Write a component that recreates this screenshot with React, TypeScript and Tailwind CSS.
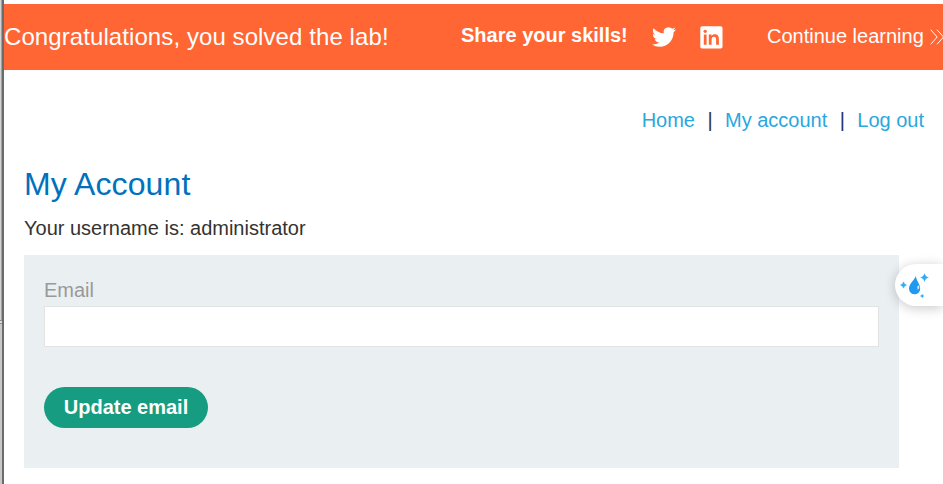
import React from "react";

function TwitterIcon() {
  return (
    <svg viewBox="0 0 24 24" className="h-[24px] w-[24px] shrink-0" fill="#fff">
      <path d="M23.953 4.57a10 10 0 01-2.825.775 4.958 4.958 0 002.163-2.723c-.951.555-2.005.959-3.127 1.184a4.92 4.92 0 00-8.384 4.482C7.69 8.095 4.067 6.13 1.64 3.162a4.822 4.822 0 00-.666 2.475c0 1.71.87 3.213 2.188 4.096a4.904 4.904 0 01-2.228-.616v.06a4.923 4.923 0 003.946 4.827 4.996 4.996 0 01-2.212.085 4.936 4.936 0 004.604 3.417 9.867 9.867 0 01-6.102 2.105c-.39 0-.779-.023-1.17-.067a13.995 13.995 0 007.557 2.209c9.053 0 13.998-7.496 13.998-13.985 0-.21 0-.42-.015-.63A9.935 9.935 0 0024 4.59z" />
    </svg>
  );
}

function LinkedInIcon() {
  return (
    <svg viewBox="0 0 23 23" className="h-[23px] w-[23px] shrink-0">
      <rect x=".3" y=".3" width="22.200" height="22.200" rx="1.800" fill="#fff" />
      <g fill="#ff6633">
        <circle cx="5.200" cy="5.300" r="1.650" />
        <path d="M3.800 8.600h2.800v10.200H3.800zM8.800 8.600h2.700V10c.7-1.100 1.800-1.700 3.200-1.700 3 0 4.200 1.800 4.200 4.900v5.600h-2.800v-5.200c0-1.800-.5-2.900-2.100-2.900-1.700 0-2.400 1.200-2.400 2.900v5.200H8.800z" />
      </g>
    </svg>
  );
}

function DropWidget() {
  return (
    <div className="absolute top-[264px] right-0 h-[42px] w-[48px] rounded-l-full bg-white shadow-[0_2px_12px_rgba(0,0,0,0.22)]">
      <svg viewBox="0 0 48 42" className="h-[42px] w-[48px]">
        <path d="M20.800 12C19.500 16 14 19.500 14 24.800a5.600 5.500 0 0 0 11.200 0C25.200 20 21.500 17 20.800 12z" fill="#1e9bf0" />
        <path d="M22.300 22.300l1.700-.8.300 2.800-1.700 1.500z" fill="#d5edff" />
        <g fill="#35adf5">
          <path d="M29.500 9Q30.300 12.700 34 13.500Q30.300 14.300 29.500 18Q28.700 14.300 25 13.500Q28.700 12.700 29.500 9z" />
          <path d="M8.500 17.800Q9.200 20.300 11.700 21Q9.200 21.700 8.500 24.200Q7.800 21.700 5.300 21Q7.800 20.300 8.500 17.800z" stroke="#35adf5" strokeWidth=".3" />
          <path d="M27.200 29.700Q27.700 31.500 29.500 32Q27.700 32.500 27.200 34.300Q26.700 32.500 24.900 32Q26.700 31.500 27.200 29.700z" />
        </g>
      </svg>
    </div>
  );
}

export default function App() {
  return (
    <div className="relative flex h-[484px] w-[943px] overflow-hidden bg-white font-['Liberation_Sans',Arial,sans-serif] text-[20px] text-[#333332]">
      <div className="flex w-[4px] shrink-0">
        <div className="flex w-[2px] flex-col">
          <div className="h-[320px] border-r border-[#a0a0a0] bg-[#d2d2d2]" />
          <div className="h-[4px] border-y border-[#8c8c8c] bg-[#dcdcdc]" />
          <div className="flex-1 bg-[#c8c8c8]" />
        </div>
        <div className="w-[2px] bg-[#6b6b6b]" />
      </div>
      <div className="flex min-w-0 flex-1 flex-col pt-[4px]">
        <header className="flex h-[66px] shrink-0 items-center overflow-hidden bg-[#ff6633] whitespace-nowrap text-white">
          <div className="w-[457px] shrink-0 text-[24px] leading-[66px] tracking-[0.085px]">Congratulations, you solved the lab!</div>
          <div className="w-[191px] shrink-0 pb-[4px] font-bold">Share your skills!</div>
          <TwitterIcon />
          <div className="w-[24px] shrink-0" />
          <LinkedInIcon />
          <div className="ml-[44px] w-[163px] shrink-0 pb-[2px]">Continue learning</div>
          <svg viewBox="0 0 14 16" className="h-[16px] w-[14px] shrink-0" fill="none" stroke="#fff">
            <path d="M.7.7 7.200 8 .7 15.300M7 .7 13.500 8 7 15.300" />
          </svg>
        </header>
        <nav className="mt-[35px] flex h-[30px] items-center justify-end pr-[19px] whitespace-nowrap text-[#29a7df]">
          <a>Home</a>
          <span className="w-[30px] text-center text-[#333332]">|</span>
          <a>My account</a>
          <span className="w-[30px] text-center text-[#28356b]">|</span>
          <a>Log out</a>
        </nav>
        <main className="flex flex-col pl-[20px]">
          <h1 className="mt-[29px] h-[40px] text-[32px] leading-[40px] tracking-[0.1px] text-[#0071bc]">My Account</h1>
          <p className="mt-[9px] h-[30px] leading-[30px]">Your username is: administrator</p>
          <form className="mt-[12px] flex h-[213px] w-[875px] flex-col items-start bg-[#eaeff2] px-[20px] pt-[20px]">
            <label className="h-[31px] leading-[30px] text-[#999]">Email</label>
            <input className="h-[41px] w-[835px] border border-[#e2e4e4] bg-white" />
            <button type="button" className="mt-[40px] h-[41px] w-[164px] rounded-full bg-[#169c80] pb-[2px] font-bold text-white">
              Update email
            </button>
          </form>
        </main>
      </div>
      <DropWidget />
    </div>
  );
}
